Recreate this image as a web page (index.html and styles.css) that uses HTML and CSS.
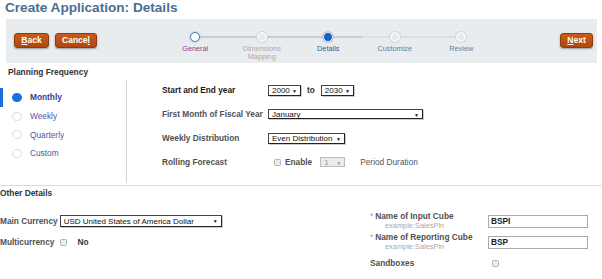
FILE: index.html
```html
<!DOCTYPE html>
<html lang="en">
<head>
<meta charset="utf-8">
<title>Create Application: Details</title>
<link rel="stylesheet" href="styles.css">
</head>
<body>
<h1 class="page-title">Create Application: Details</h1>

<div class="toolbar">
  <div class="tb-left">
    <button class="btn btn-back"><u>B</u>ack</button>
    <button class="btn btn-cancel">Cance<u>l</u></button>
  </div>
  <ol class="train">
    <li class="step done"><span class="dot"></span><span class="step-lbl">General</span></li>
    <li class="step done"><span class="dot"></span><span class="step-lbl">Dimensions<br>Mapping</span></li>
    <li class="step current"><span class="dot"></span><span class="step-lbl">Details</span></li>
    <li class="step todo"><span class="dot"></span><span class="step-lbl">Customize</span></li>
    <li class="step todo"><span class="dot"></span><span class="step-lbl">Review</span></li>
  </ol>
  <button class="btn btn-next"><u>N</u>ext</button>
</div>

<section class="planning">
  <h2 class="sec-title pf-title">Planning Frequency</h2>
  <div class="pf-body">
    <ul class="radios">
      <li class="radio active"><span class="rdot"></span>Monthly</li>
      <li class="radio"><span class="rdot"></span>Weekly</li>
      <li class="radio"><span class="rdot"></span>Quarterly</li>
      <li class="radio"><span class="rdot"></span>Custom</li>
    </ul>
    <div class="pf-fields">
      <div class="row">
        <span class="lbl lbl-strong">Start and End year</span>
        <span class="sel sel-year">2000<i class="arr">▼</i></span>
        <span class="to">to</span>
        <span class="sel sel-year">2030<i class="arr">▼</i></span>
      </div>
      <div class="row">
        <span class="lbl">First Month of Fiscal Year</span>
        <span class="sel sel-month">January<i class="arr">▼</i></span>
      </div>
      <div class="row">
        <span class="lbl">Weekly Distribution</span>
        <span class="sel sel-dist">Even Distribution<i class="arr">▼</i></span>
      </div>
      <div class="row">
        <span class="lbl">Rolling Forecast</span>
        <span class="cb cb-enable"></span>
        <span class="enable">Enable</span>
        <span class="sel sel-dis">1<i class="arr">▼</i></span>
        <span class="period">Period Duration</span>
      </div>
    </div>
  </div>
</section>

<section class="other">
  <h2 class="sec-title">Other Details</h2>
  <div class="other-body">
    <div class="other-left">
      <div class="orow orow-cur">
        <span class="lbl">Main Currency</span>
        <span class="sel sel-cur">USD United States of America Dollar<i class="arr">▼</i></span>
      </div>
      <div class="orow orow-multi">
        <span class="lbl">Multicurrency</span>
        <span class="cb cb-multi"></span>
        <span class="no">No</span>
      </div>
    </div>
    <div class="other-right">
      <div class="cube">
        <div class="cube-lbl">
          <div class="cube-name"><span class="req">*</span>Name of Input Cube</div>
          <div class="cube-ex">example:SalesPln</div>
        </div>
        <span class="inp">BSPI</span>
      </div>
      <div class="cube">
        <div class="cube-lbl">
          <div class="cube-name"><span class="req">*</span>Name of Reporting Cube</div>
          <div class="cube-ex">example:SalesPln</div>
        </div>
        <span class="inp">BSP</span>
      </div>
      <div class="sandbox">
        <span class="lbl sb-lbl">Sandboxes</span>
        <span class="cb"></span>
      </div>
    </div>
  </div>
</section>
</body>
</html>
```

FILE: styles.css
```css
* { box-sizing: border-box; }

body {
  margin: 0;
  width: 602px;
  height: 279px;
  overflow: hidden;
  background: #fff;
  font-family: "Liberation Sans", Arial, sans-serif;
  color: #333;
}

.page-title {
  margin: 0;
  height: 19px;
  padding: 0 0 0 5px;
  font-size: 13.6px;
  line-height: 15px;
  font-weight: bold;
  color: #4a6f90;
}

/* toolbar */
.toolbar {
  display: flex;
  align-items: flex-start;
  height: 44px;
  margin: 0 5px 0 6px;
  background: #e9ecee;
}

.tb-left {
  display: flex;
  gap: 6px;
  padding-left: 8px;
  margin-top: 14px;
}

.btn {
  height: 15px;
  padding: 0;
  border: 1px solid #8e3a0c;
  border-radius: 3px;
  background: linear-gradient(#c95c1c, #b0470e);
  box-shadow: 0 1px 2px rgba(0, 0, 0, 0.35);
  color: #fff;
  font-family: "Liberation Sans", Arial, sans-serif;
  font-size: 8.5px;
  font-weight: bold;
  line-height: 13px;
  text-align: center;
}
.btn-back { width: 35px; }
.btn-cancel { width: 42px; }
.btn-next { width: 33px; margin: 14px 4px 0 auto; }

.train {
  display: flex;
  list-style: none;
  margin: 13px 0 0 65px;
  padding: 0;
}

.step {
  position: relative;
  width: 66.5px;
  display: flex;
  flex-direction: column;
  align-items: center;
}
.step::before,
.step::after {
  content: "";
  position: absolute;
  top: 4px;
  height: 2px;
  width: 50%;
  background: #c9ccd0;
}
.step::before { left: 0; }
.step::after { right: 0; }
.step:first-child::before,
.step:last-child::after { display: none; }
.step.todo::before,
.step.todo::after { background: #dde0e3; }

.dot {
  position: relative;
  z-index: 1;
  width: 10px;
  height: 10px;
  border-radius: 50%;
  background: #e6e8ea;
  border: 2px solid #f6f7f8;
  box-shadow: 0 0 0 1px #d2d5d8;
}
.step:first-child .dot {
  background: #fff;
  border: 1.5px solid #3b80d6;
  box-shadow: 0 0 0 1px #d2d5d8;
}
.step.current .dot {
  background: #1462d2;
  border: 1.5px solid #dfe6ee;
  box-shadow: 0 0 0 1px #c3c9cf;
}

.step-lbl {
  margin-top: 3px;
  font-size: 7.3px;
  line-height: 8.3px;
  text-align: center;
  color: #5d7fa4;
}
.step:nth-child(1) .step-lbl { color: #8a3b92; }
.step:nth-child(2) .step-lbl { color: #a8abae; }
.step:nth-child(3) .step-lbl { color: #2a5f9a; }

/* planning frequency */
.sec-title {
  margin: 0;
  font-size: 8.4px;
  line-height: 10px;
  font-weight: bold;
  color: #333;
}
.pf-title {
  padding: 4px 0 0 8px;
  height: 15px;
}

.pf-body {
  display: flex;
  height: 105px;
}

.radios {
  list-style: none;
  margin: 2px 0 0;
  padding: 8px 0 0;
  width: 127px;
  border-right: 1px solid #d4d4d4;
}

.radio {
  display: flex;
  align-items: center;
  gap: 8px;
  height: 18.7px;
  padding-left: 12px;
  font-size: 8.3px;
  color: #5454a6;
}
.radio.active {
  padding-left: 9px;
  border-left: 3px solid #1a6fe0;
  font-weight: bold;
  color: #3c3c8c;
}

.rdot {
  width: 10px;
  height: 9px;
  border-radius: 50%;
  border: 1px solid #dcdcdc;
  background: #fff;
}
.radio.active .rdot {
  border-color: #1a6fe0;
  background: #1a6fe0;
}

.pf-fields {
  padding-left: 35px;
}

.row {
  display: flex;
  align-items: center;
  height: 24px;
}

.lbl {
  font-size: 8.3px;
  font-weight: bold;
  color: #505050;
}
.row .lbl { width: 106px; }
.lbl-strong { color: #1a1a1a; }

.sel {
  position: relative;
  display: flex;
  align-items: center;
  height: 11px;
  padding-left: 3px;
  border: 1px solid #444;
  border-right-color: #222;
  border-bottom-color: #222;
  box-shadow: 1px 1px 0 #ccc;
  background: #fff;
  font-size: 8px;
  color: #111;
}
.arr {
  position: absolute;
  right: 3px;
  top: 1px;
  font-style: normal;
  font-size: 5px;
  line-height: 8px;
}
.sel-year { width: 33px; }
.sel-month { width: 155px; height: 10px; }
.sel-dist { width: 77px; }
.sel-dis {
  width: 25px;
  height: 10px;
  border-color: #bbb;
  box-shadow: none;
  background: #ececec;
  color: #999;
}
.sel-dis .arr { color: #999; }

.to {
  margin: 0 6px 0 6px;
  font-size: 8.3px;
  font-weight: bold;
  color: #333;
}

.cb {
  display: inline-block;
  width: 7px;
  height: 7px;
  border: 1px solid #b4b4b4;
  border-radius: 1.5px;
  background: #ececec;
}
.cb-enable { margin-left: 6px; }
.enable {
  margin-left: 4px;
  font-size: 8.3px;
  font-weight: bold;
  color: #505050;
}
.sel-dis { margin-left: 8px; }
.period {
  margin-left: 15px;
  font-size: 8.3px;
  color: #555;
}

/* other details */
.other {
  margin-top: 2px;
  border-top: 1px solid #dcdcdc;
}
.other > .sec-title {
  padding-top: 2px;
  height: 12px;
}

.other-body {
  display: flex;
}

.other-left {
  width: 370px;
  padding-top: 16px;
}

.orow {
  display: flex;
  align-items: center;
  height: 14px;
}
.orow-multi { margin-top: 7px; }
.sel-cur { width: 162px; height: 12px; margin-left: 2px; }
.cb-multi { margin-left: 6px; }
.no {
  margin-left: 10px;
  font-size: 8.3px;
  font-weight: bold;
  color: #333;
}

.other-right {
  padding-top: 14px;
}

.cube {
  display: flex;
  align-items: flex-start;
  margin-bottom: 3px;
}
.cube-lbl {
  width: 118px;
}
.cube-name {
  font-size: 8.3px;
  line-height: 9px;
  font-weight: bold;
  color: #505050;
}
.req {
  color: #a0a0a0;
  font-weight: normal;
  margin-right: 2px;
}
.cube-ex {
  padding-left: 15px;
  font-size: 7.4px;
  line-height: 9px;
  color: #a8a8a8;
}
.inp {
  display: flex;
  align-items: center;
  width: 100px;
  height: 13px;
  margin-top: 2.5px;
  padding-left: 2px;
  border: 1px solid #aaa;
  background: #fff;
  font-size: 8.3px;
  font-weight: bold;
  color: #222;
}

.sandbox {
  display: flex;
  align-items: center;
  height: 10px;
  margin-top: 7px;
}
.sb-lbl { width: 122px; }
```
